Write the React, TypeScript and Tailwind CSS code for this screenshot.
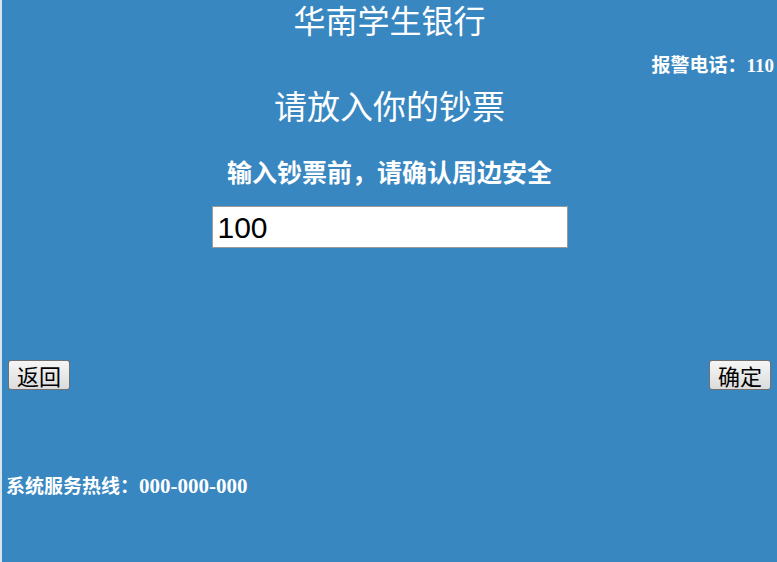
import React from "react";

const serif = { fontFamily: '"Liberation Serif", "Noto Sans CJK SC", serif' };

export default function App() {
  return (
    <div
      className="w-[777px] h-[562px] bg-[#3887c1] text-white border-l-2 border-[#d6e4f0] overflow-hidden"
      style={serif}
    >
      <h1 className="text-[32px] leading-[40px] text-center pt-[2px] font-normal">华南学生银行</h1>
      <p className="text-[19px] leading-[20px] font-bold text-right pr-[3px] mt-[14px]">报警电话：110</p>
      <h2 className="text-[33px] leading-[40px] text-center mt-[12px] font-normal">请放入你的钞票</h2>
      <h3 className="text-[25px] leading-[30px] text-center mt-[31px] font-bold">输入钞票前，请确认周边安全</h3>
      <div className="flex justify-center mt-[17px]">
        <input
          defaultValue="100"
          className="w-[356px] h-[42px] bg-white text-black border border-[#9a9a9a] pl-[5px] text-[30px] outline-none"
          style={{ fontFamily: '"Liberation Sans", Arial, sans-serif' }}
        />
      </div>
      <div className="flex justify-between pl-[6px] pr-[6px] mt-[112px]">
        <button className="h-[30px] px-[8px] text-[22px] leading-[26px] text-black rounded-[3px] border border-[#707070] bg-gradient-to-b from-[#f6f6f6] to-[#dcdcdc]" style={{ fontFamily: '"Noto Sans CJK SC", sans-serif' }}>
          返回
        </button>
        <button className="h-[30px] px-[8px] text-[22px] leading-[26px] text-black rounded-[3px] border border-[#707070] bg-gradient-to-b from-[#f6f6f6] to-[#dcdcdc]" style={{ fontFamily: '"Noto Sans CJK SC", sans-serif' }}>
          确定
        </button>
      </div>
      <p className="text-[19px] leading-[24px] font-bold pl-[4px] mt-[84px]">
        系统服务热线：<span className="text-[21px]">000-000-000</span>
      </p>
    </div>
  );
}
